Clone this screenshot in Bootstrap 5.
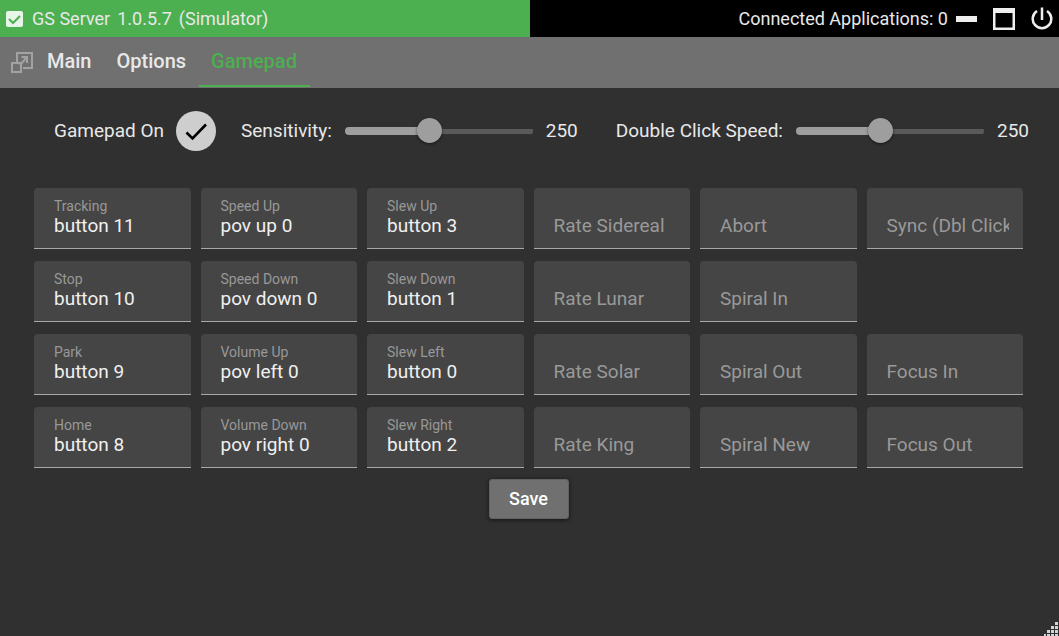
<!DOCTYPE html>
<html lang="en" data-bs-theme="dark">
<head>
<meta charset="utf-8">
<meta name="viewport" content="width=device-width, initial-scale=1">
<title>GS Server</title>
<link href="https://cdn.jsdelivr.net/npm/bootstrap@5.3.0/dist/css/bootstrap.min.css" rel="stylesheet">
<style>
body { background: #303030; color: #e8e8e8; font-family: Roboto, "Noto Sans", sans-serif; font-size: 19px; line-height: 24px; }
.titlebar { background: #000; height: 37px; font-size: 18px; }
.title-side { background: #4caf50; }
.title-text { gap: 7px; }
.title-tools { padding-right: 6px; }
.win-btn { color: #eee; line-height: 0; }
.tabbar { background: #707070; height: 51px; padding-left: 11px; }
.tabbar .nav-link { color: #e8e8e8; font-size: 20px; font-weight: 500; line-height: 24px; padding: 12px 13px 10px 12px; border-bottom: 2px solid transparent; height: 50px; }
.tabbar .nav-link.active { color: #4caf50; border-color: #4caf50; }
.tabbar .popout { color: #a2a2a2; line-height: 0; margin: 0 2px 2px 0; }
.panel { padding: 23px 36px 0 34px; }
.settings { padding-left: 20px; margin-right: -6px; }
.round-check { appearance: none; width: 40px; height: 40px; margin: 0 25px 0 12px; border-radius: 50%; background: #cecece url("data:image/svg+xml,%3Csvg xmlns='http://www.w3.org/2000/svg' viewBox='0 0 40 40'%3E%3Cpath d='M10.500 21.500L16.500 27.500L30 13.500' fill='none' stroke='%23000' stroke-width='2.600'/%3E%3C/svg%3E"); }
.slider { appearance: none; background: none; width: 188px; height: 26px; margin: 0 13px; }
.slider::-webkit-slider-runnable-track { height: 8px; border-radius: 4px; background: linear-gradient(#9e9e9e, #9e9e9e) left / 45% 8px no-repeat, linear-gradient(#5a5a5a, #5a5a5a) center / 100% 5px no-repeat; }
.slider::-webkit-slider-thumb { appearance: none; width: 25px; height: 25px; margin-top: -9px; border-radius: 50%; background: #9e9e9e; box-shadow: 0 1px 3px #0008; }
.bindings { display: grid; grid-template-columns: repeat(6, minmax(0, 1fr)); gap: 12px 10px; margin-top: 37px; }
.binding { background: #454545; border-bottom: 1px solid #a8a8a8; border-radius: 4px 4px 0 0; height: 61px; padding: 10px 14px 0 20px; }
.binding label { display: block; color: #989898; font-size: 14px; line-height: 16px; }
.binding input { display: block; width: 100%; height: 24px; padding: 0; border: 0; background: none; color: #f0f0f0; outline: 0; }
.binding input::placeholder { color: #999; opacity: 1; }
.binding input:only-child { margin-top: 16px; }
.save { background: #707070; color: #fff; font-size: 18px; font-weight: 500; line-height: 24px; width: 80px; height: 40px; border: 1px solid #626262; border-radius: 3px; padding: 0; margin-top: 11px; box-shadow: 0 1px 4px #0009; }
.grip { right: 1px; bottom: 0; line-height: 0; }
</style>
</head>
<body class="min-vh-100">
<header>
  <div class="titlebar d-flex align-items-stretch">
    <div class="title-side w-50 d-flex align-items-center">
      <svg class="ms-1" width="20" height="20" viewBox="0 0 20 20" aria-hidden="true"><rect x="2" y="2" width="17" height="16" rx="2" fill="#e8f5e9"/><path d="M5 10l4 4 7-7" fill="none" stroke="#4caf50" stroke-width="2"/></svg>
      <div class="title-text d-flex ms-2 text-nowrap"><span>GS Server</span><span>1.0.5.7</span><span>(Simulator)</span></div>
    </div>
    <div class="title-tools w-50 d-flex align-items-center justify-content-end">
      <span class="text-nowrap">Connected Applications: 0</span>
      <button class="win-btn btn p-0 border-0 ms-2" type="button" aria-label="Minimize"><svg width="21" height="24" viewBox="0 0 21 24"><path d="M0 9h21v6H0z" fill="currentColor"/></svg></button>
      <button class="win-btn btn p-0 border-0 ms-3" type="button" aria-label="Maximize"><svg width="22" height="24" viewBox="0 0 22 24"><path fill-rule="evenodd" d="M0 1h22v22H0zM2.500 6v14.500h17V6z" fill="currentColor"/></svg></button>
      <button class="win-btn btn p-0 border-0 ms-3" type="button" aria-label="Power"><svg width="22" height="24" viewBox="0 0 22 24"><path d="M11 .5v12.500M6 4A9.300 9.300 0 1 0 16 4" fill="none" stroke="currentColor" stroke-width="2.500"/></svg></button>
    </div>
  </div>
  <nav class="tabbar nav flex-nowrap align-items-start">
    <button class="popout btn p-0 border-0 align-self-center" type="button" aria-label="Open in window"><svg width="22" height="22" viewBox="0 0 22 22" fill="none" stroke="currentColor" stroke-width="2"><path d="M6 11V2h15v15h-9M1 12h9v9H1zM9 14l7-8M10.500 6H16v6"/></svg></button>
    <a class="nav-link" href="#main">Main</a>
    <a class="nav-link" href="#options">Options</a>
    <a class="nav-link active" href="#gamepad" aria-current="page">Gamepad</a>
  </nav>
</header>
<main class="panel">
  <form>
    <div class="settings d-flex align-items-center text-nowrap">
      <label for="on">Gamepad On</label>
      <input class="round-check flex-shrink-0" type="checkbox" id="on" checked>
      <label for="sens">Sensitivity:</label>
      <input class="slider" type="range" id="sens" min="100" max="440" value="250">
      <output for="sens">250</output>
      <label class="ms-auto" for="dbl">Double Click Speed:</label>
      <input class="slider" type="range" id="dbl" min="100" max="440" value="250">
      <output for="dbl">250</output>
    </div>
    <div class="bindings">
      <div class="binding"><label for="tracking">Tracking</label><input type="text" id="tracking" value="button 11"></div>
      <div class="binding"><label for="speedup">Speed Up</label><input type="text" id="speedup" value="pov up 0"></div>
      <div class="binding"><label for="slewup">Slew Up</label><input type="text" id="slewup" value="button 3"></div>
      <div class="binding"><input type="text" placeholder="Rate Sidereal" aria-label="Rate Sidereal"></div>
      <div class="binding"><input type="text" placeholder="Abort" aria-label="Abort"></div>
      <div class="binding"><input type="text" placeholder="Sync (Dbl Click)" aria-label="Sync (Dbl Click)"></div>

      <div class="binding"><label for="stop">Stop</label><input type="text" id="stop" value="button 10"></div>
      <div class="binding"><label for="speeddown">Speed Down</label><input type="text" id="speeddown" value="pov down 0"></div>
      <div class="binding"><label for="slewdown">Slew Down</label><input type="text" id="slewdown" value="button 1"></div>
      <div class="binding"><input type="text" placeholder="Rate Lunar" aria-label="Rate Lunar"></div>
      <div class="binding"><input type="text" placeholder="Spiral In" aria-label="Spiral In"></div>
      <div></div>

      <div class="binding"><label for="park">Park</label><input type="text" id="park" value="button 9"></div>
      <div class="binding"><label for="volup">Volume Up</label><input type="text" id="volup" value="pov left 0"></div>
      <div class="binding"><label for="slewleft">Slew Left</label><input type="text" id="slewleft" value="button 0"></div>
      <div class="binding"><input type="text" placeholder="Rate Solar" aria-label="Rate Solar"></div>
      <div class="binding"><input type="text" placeholder="Spiral Out" aria-label="Spiral Out"></div>
      <div class="binding"><input type="text" placeholder="Focus In" aria-label="Focus In"></div>

      <div class="binding"><label for="home">Home</label><input type="text" id="home" value="button 8"></div>
      <div class="binding"><label for="voldown">Volume Down</label><input type="text" id="voldown" value="pov right 0"></div>
      <div class="binding"><label for="slewright">Slew Right</label><input type="text" id="slewright" value="button 2"></div>
      <div class="binding"><input type="text" placeholder="Rate King" aria-label="Rate King"></div>
      <div class="binding"><input type="text" placeholder="Spiral New" aria-label="Spiral New"></div>
      <div class="binding"><input type="text" placeholder="Focus Out" aria-label="Focus Out"></div>
    </div>
    <div class="text-center"><button class="save btn" type="submit">Save</button></div>
  </form>
</main>
<div class="grip position-fixed"><svg width="14" height="14" viewBox="0 0 14 14" fill="#cfd4da" aria-hidden="true"><path d="M11 0h3v3h-3zM11 4h3v3h-3zM7 4h3v3H7zM11 8h3v3h-3zM7 8h3v3H7zM3 8h3v3H3zM11 12h3v2h-3zM7 12h3v2H7zM3 12h3v2H3zM0 12h2v2H0z"/></svg></div>
<script src="https://cdn.jsdelivr.net/npm/bootstrap@5.3.0/dist/js/bootstrap.bundle.min.js"></script>
</body>
</html>
